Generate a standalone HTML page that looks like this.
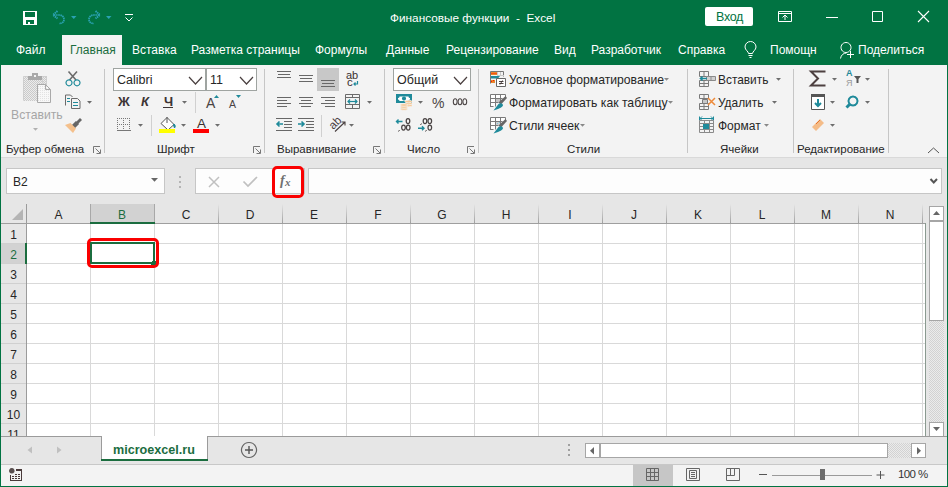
<!DOCTYPE html>
<html><head><meta charset="utf-8">
<style>
*{margin:0;padding:0;box-sizing:border-box}
html,body{width:948px;height:487px;overflow:hidden;background:#e6e6e6;font-family:"Liberation Sans",sans-serif;color:#262626}
.a{position:absolute}
.t{position:absolute;white-space:pre;font-size:12px;line-height:14px}
.w{color:#fff}
.l{position:absolute;white-space:pre;font-size:11.5px;line-height:14px;color:#262626}
.c{position:absolute;white-space:pre;font-size:12px;line-height:14px;color:#262626;text-align:center}
svg{position:absolute;left:0;top:0;overflow:visible}
</style></head><body>
<div class="a" style="left:0px;top:0px;width:948px;height:65px;background:#017342;"></div>
<div class="a" style="left:0px;top:64px;width:1px;height:423px;background:#017342;"></div>
<div class="a" style="left:947px;top:64px;width:1px;height:423px;background:#017342;"></div>
<div class="a" style="left:0px;top:486px;width:948px;height:1px;background:#017342;"></div>
<div class="a" style="left:705px;top:7px;width:48px;height:19px;background:#fff;border-radius:2px"></div>
<div class="a" style="left:62px;top:35px;width:60px;height:30px;background:#f3f3f3;"></div>
<div class="a" style="left:1px;top:65px;width:946px;height:92px;background:#f3f3f3;"></div>
<div class="a" style="left:1px;top:157px;width:946px;height:1px;background:#d9d9d9;"></div>
<div class="a" style="left:1px;top:204px;width:925px;height:20px;background:#e6e6e6;"></div>
<div class="a" style="left:27px;top:224px;width:898px;height:212px;background:#fff;"></div>
<div class="a" style="left:1px;top:224px;width:25px;height:212px;background:#e6e6e6;"></div>
<div class="a" style="left:1px;top:436px;width:946px;height:28px;background:#e6e6e6;"></div>
<div class="a" style="left:1px;top:464px;width:946px;height:1px;background:#c8c8c8;"></div>
<div class="a" style="left:1px;top:465px;width:946px;height:21px;background:#f3f3f3;"></div>
<svg width="948" height="487" viewBox="0 0 948 487" shape-rendering="auto">
<defs><pattern id="dith2" x="0" y="0" width="2" height="2" patternUnits="userSpaceOnUse"><rect width="2" height="2" fill="#ececec"/><rect width="1" height="1" fill="#cacaca"/><rect x="1" y="1" width="1" height="1" fill="#cacaca"/></pattern><pattern id="dith3" x="0" y="0" width="2" height="2" patternUnits="userSpaceOnUse"><rect width="2" height="2" fill="#f8f8f8"/><rect width="1" height="1" fill="#e2e2e2"/></pattern><pattern id="dith" x="0" y="0" width="2" height="2" patternUnits="userSpaceOnUse"><rect width="2" height="2" fill="#ebebeb"/><rect width="1" height="1" fill="#d2d2d2"/><rect x="1" y="1" width="1" height="1" fill="#d2d2d2"/></pattern><linearGradient id="sepg" x1="0" y1="0" x2="0" y2="1"><stop offset="0" stop-color="#e6e6e6"/><stop offset="1" stop-color="#a0a0a0"/></linearGradient></defs>
<rect x="23" y="11" width="14" height="14" fill="#fff"/>
<rect x="25" y="12" width="10" height="5" fill="#017342"/>
<rect x="26" y="20" width="8" height="4" fill="#017342"/>
<rect x="28" y="22" width="2" height="2" fill="#fff"/>
<path d="M57.5 11 L53 15 L57.5 18.5" fill="none" stroke="#2ba2b2" stroke-width="1.9" stroke-dasharray="1.5 0.6"/>
<path d="M54 15 H59 C62 15 64 17 64 19.5 C64 22 62 23.5 59 23.5" fill="none" stroke="#2ba2b2" stroke-width="1.7" stroke-dasharray="1.5 0.6"/>
<path d="M71 16h5.5l-2.75 3z" fill="#2ba2b2" stroke="none" stroke-width="1" />
<path d="M95.5 11 L100 15 L95.5 18.5" fill="none" stroke="#2ba2b2" stroke-width="1.9" stroke-dasharray="1.5 0.6"/>
<path d="M99 15 H94 C91 15 89 17 89 19.5 C89 22 91 23.5 94 23.5" fill="none" stroke="#2ba2b2" stroke-width="1.7" stroke-dasharray="1.5 0.6"/>
<path d="M106 16h5.5l-2.75 3z" fill="#2ba2b2" stroke="none" stroke-width="1" />
<rect x="125" y="14" width="8" height="1" fill="#fff"/>
<path d="M125.5 17.5 L129 21 L132.5 17.5" fill="none" stroke="#fff" stroke-width="1" />
<path d="M778.5 11.5h13v10h-13z M778.5 13.5h13" fill="none" stroke="#fff" stroke-width="1" />
<path d="M785 20v-5 M782.5 17.5l2.5-2.5l2.5 2.5" fill="none" stroke="#fff" stroke-width="1" />
<rect x="826" y="17" width="12" height="1" fill="#fff"/>
<path d="M872.5 11.5h10v10h-10z" fill="none" stroke="#fff" stroke-width="1" />
<path d="M918 11 L929 22 M929 11 L918 22" fill="none" stroke="#fff" stroke-width="1.1" />
<path d="M748.5 53.5c0-2-3.5-3.5-3.5-6.5a5.5 5.5 0 0 1 11 0c0 3-3.5 4.5-3.5 6.5z" fill="none" stroke="#fff" stroke-width="1" />
<path d="M748.5 55.5h4 M749.5 57.5h2" fill="none" stroke="#fff" stroke-width="1" />
<path d="M846 42.5a5 5 0 1 0 0.01 0z" fill="none" stroke="#fff" stroke-width="1" />
<path d="M840.5 58.5c0.5-3.5 3-5.5 6-5.5" fill="none" stroke="#fff" stroke-width="1" />
<path d="M850.5 51v7 M847 54.5h7" fill="none" stroke="#fff" stroke-width="1" />
<rect x="104" y="69" width="1" height="84" fill="#c6c6c6"/>
<rect x="264" y="69" width="1" height="84" fill="#c6c6c6"/>
<rect x="384" y="69" width="1" height="84" fill="#c6c6c6"/>
<rect x="478" y="69" width="1" height="84" fill="#c6c6c6"/>
<rect x="687" y="69" width="1" height="84" fill="#c6c6c6"/>
<rect x="793" y="69" width="1" height="84" fill="#c6c6c6"/>
<rect x="888" y="69" width="1" height="84" fill="#c6c6c6"/>
<path d="M93.5 153v-6.5h6.5" fill="none" stroke="#777" stroke-width="1" />
<path d="M95.5 148.5l4.5 4.5 M100.5 149.5v4h-4" fill="none" stroke="#777" stroke-width="1" />
<path d="M253.5 153v-6.5h6.5" fill="none" stroke="#777" stroke-width="1" />
<path d="M255.5 148.5l4.5 4.5 M260.5 149.5v4h-4" fill="none" stroke="#777" stroke-width="1" />
<path d="M373.5 153v-6.5h6.5" fill="none" stroke="#777" stroke-width="1" />
<path d="M375.5 148.5l4.5 4.5 M380.5 149.5v4h-4" fill="none" stroke="#777" stroke-width="1" />
<path d="M467.5 153v-6.5h6.5" fill="none" stroke="#777" stroke-width="1" />
<path d="M469.5 148.5l4.5 4.5 M474.5 149.5v4h-4" fill="none" stroke="#777" stroke-width="1" />
<path d="M928 153 L933.5 148 L939 153" fill="none" stroke="#555" stroke-width="1" />
<rect x="23" y="76" width="24" height="25" fill="url(#dith2)"/>
<path d="M23.5 100.5v-24h5 M41.5 76.5h5v24z" fill="none" stroke="#cfcfcf" stroke-width="1" />
<rect x="28" y="76" width="14" height="4" fill="#a9a9a9"/>
<rect x="32" y="73" width="6" height="4" fill="#a9a9a9"/>
<rect x="34" y="75" width="2" height="2" fill="#f3f3f3"/>
<path d="M37.5 84.5h8l5 5v13h-13z" fill="url(#dith3)" stroke="#a9a9a9" stroke-width="1" />
<path d="M45.5 84.5v5h5" fill="none" stroke="#a9a9a9" stroke-width="1" />
<path d="M33 128h5l-2.5 2.75z" fill="#b0b0b0"/>
<path d="M68.5 71.5 L76 80 M77 71.5 L69.5 80" fill="none" stroke="#6b6b6b" stroke-width="1.6" />
<path d="M69 79.8a3 3 0 1 0 0.01 0z M77 79.8a3 3 0 1 0 0.01 0z" fill="none" stroke="#1f8a9a" stroke-width="1.2" />
<path d="M65.5 105.5v-10.5h5l2 2" fill="none" stroke="#6b6b6b" stroke-width="1" />
<path d="M71.5 108.5v-10h6l2.5 2.5v7.5z" fill="#f3f3f3" stroke="#6b6b6b" stroke-width="1" />
<path d="M67 98.5h3 M67 101.5h3 M73 102.5h5 M73 105.5h5" fill="none" stroke="#1f8a9a" stroke-width="1" />
<path d="M87 101h5l-2.5 2.75z" fill="#6b6b6b"/>
<path d="M81 119 L77 123" fill="none" stroke="#666" stroke-width="2.8" />
<path d="M77.5 122.5 L72.5 127.5" fill="none" stroke="#666" stroke-width="4.5" />
<path d="M65 125 L70.5 123 L76 128.5 L73 133 Z" fill="#f4c08c" stroke="none" stroke-width="1" />
<rect x="113" y="68" width="93" height="23" fill="#9fa4a1"/>
<rect x="114" y="69" width="91" height="21" fill="#fff"/>
<rect x="206" y="68" width="51" height="23" fill="#9fa4a1"/>
<rect x="207" y="69" width="49" height="21" fill="#fff"/>
<path d="M189 77L195.5 84L202 77" fill="none" stroke="#4a4040" stroke-width="1.2"/>
<path d="M240 77L246.5 84L253 77" fill="none" stroke="#4a4040" stroke-width="1.2"/>
<rect x="163" y="107" width="10" height="1" fill="#3d3535"/>
<path d="M182 101h5l-2.5 2.75z" fill="#6d6d6d"/>
<rect x="195" y="92" width="1" height="21" fill="#d0d0d0"/>
<path d="M214 98h5l-2.5-3z" fill="#1f8a9a" stroke="none" stroke-width="1" />
<path d="M236 95h5l-2.5 3z" fill="#1f8a9a" stroke="none" stroke-width="1" />
<rect x="117" y="118" width="1" height="1" fill="#777"/>
<rect x="119" y="118" width="1" height="1" fill="#777"/>
<rect x="121" y="118" width="1" height="1" fill="#777"/>
<rect x="123" y="118" width="1" height="1" fill="#777"/>
<rect x="125" y="118" width="1" height="1" fill="#777"/>
<rect x="127" y="118" width="1" height="1" fill="#777"/>
<rect x="129" y="118" width="1" height="1" fill="#777"/>
<rect x="117" y="124" width="1" height="1" fill="#777"/>
<rect x="119" y="124" width="1" height="1" fill="#777"/>
<rect x="121" y="124" width="1" height="1" fill="#777"/>
<rect x="123" y="124" width="1" height="1" fill="#777"/>
<rect x="125" y="124" width="1" height="1" fill="#777"/>
<rect x="127" y="124" width="1" height="1" fill="#777"/>
<rect x="129" y="124" width="1" height="1" fill="#777"/>
<rect x="117" y="118" width="1" height="1" fill="#777"/>
<rect x="117" y="120" width="1" height="1" fill="#777"/>
<rect x="117" y="122" width="1" height="1" fill="#777"/>
<rect x="117" y="124" width="1" height="1" fill="#777"/>
<rect x="117" y="126" width="1" height="1" fill="#777"/>
<rect x="117" y="128" width="1" height="1" fill="#777"/>
<rect x="123" y="118" width="1" height="1" fill="#777"/>
<rect x="123" y="120" width="1" height="1" fill="#777"/>
<rect x="123" y="122" width="1" height="1" fill="#777"/>
<rect x="123" y="124" width="1" height="1" fill="#777"/>
<rect x="123" y="126" width="1" height="1" fill="#777"/>
<rect x="123" y="128" width="1" height="1" fill="#777"/>
<rect x="129" y="118" width="1" height="1" fill="#777"/>
<rect x="129" y="120" width="1" height="1" fill="#777"/>
<rect x="129" y="122" width="1" height="1" fill="#777"/>
<rect x="129" y="124" width="1" height="1" fill="#777"/>
<rect x="129" y="126" width="1" height="1" fill="#777"/>
<rect x="129" y="128" width="1" height="1" fill="#777"/>
<rect x="117" y="130" width="14" height="1" fill="#777"/>
<path d="M138 124h5l-2.5 2.75z" fill="#6d6d6d"/>
<rect x="151" y="115" width="1" height="21" fill="#d0d0d0"/>
<path d="M167 117.5 L174 124.5 L168 130 L161 123.5 Z" fill="#fff" stroke="#555" stroke-width="1" />
<path d="M167 117 v6" fill="none" stroke="#555" stroke-width="1" />
<path d="M174 124 c1.5 1 1.5 3 0.5 4 l-1-3z" fill="#1f8a9a" stroke="#1f8a9a" stroke-width="1" />
<rect x="159" y="129" width="16" height="4" fill="#ffff00"/>
<path d="M181 124h5l-2.5 2.75z" fill="#6d6d6d"/>
<rect x="193" y="129" width="16" height="4" fill="#ff0000"/>
<path d="M215 124h5l-2.5 2.75z" fill="#6d6d6d"/>
<rect x="277" y="71" width="14" height="1" fill="#676767"/>
<rect x="277" y="77" width="14" height="1" fill="#676767"/>
<rect x="278" y="74" width="12" height="1" fill="#676767"/>
<rect x="299" y="75" width="14" height="1" fill="#676767"/>
<rect x="299" y="81" width="14" height="1" fill="#676767"/>
<rect x="300" y="78" width="12" height="1" fill="#676767"/>
<rect x="317" y="68" width="22" height="23" fill="#c8c8c8"/>
<rect x="321" y="80" width="14" height="1" fill="#676767"/>
<rect x="321" y="86" width="14" height="1" fill="#676767"/>
<rect x="322" y="83" width="12" height="1" fill="#676767"/>
<path d="M357.5 81v3h-3.5 M355.5 82.5l-1.5 1.5l1.5 1.5" fill="none" stroke="#1f8a9a" stroke-width="1.2" />
<rect x="277" y="97" width="14" height="1" fill="#676767"/>
<rect x="299" y="97" width="14" height="1" fill="#676767"/>
<rect x="321" y="97" width="14" height="1" fill="#676767"/>
<rect x="277" y="100" width="10" height="1" fill="#676767"/>
<rect x="301" y="100" width="10" height="1" fill="#676767"/>
<rect x="325" y="100" width="10" height="1" fill="#676767"/>
<rect x="277" y="103" width="14" height="1" fill="#676767"/>
<rect x="299" y="103" width="14" height="1" fill="#676767"/>
<rect x="321" y="103" width="14" height="1" fill="#676767"/>
<rect x="277" y="106" width="10" height="1" fill="#676767"/>
<rect x="301" y="106" width="10" height="1" fill="#676767"/>
<rect x="325" y="106" width="10" height="1" fill="#676767"/>
<path d="M345.5 94.5h14v14h-14z M345.5 97.5h14 M345.5 104.5h14 M352.5 94.5v3 M352.5 104.5v4" fill="none" stroke="#6b6b6b" stroke-width="1" />
<path d="M348 101.5h9" fill="none" stroke="#1f8a9a" stroke-width="1.2" />
<path d="M350 99.5l-2 2l2 2 M355 99.5l2 2l-2 2" fill="none" stroke="#1f8a9a" stroke-width="1.2" />
<path d="M367 101h5l-2.5 2.75z" fill="#6d6d6d"/>
<rect x="276" y="118" width="16" height="1" fill="#676767"/>
<rect x="298" y="118" width="16" height="1" fill="#676767"/>
<rect x="276" y="130" width="16" height="1" fill="#676767"/>
<rect x="298" y="130" width="16" height="1" fill="#676767"/>
<rect x="284" y="121" width="8" height="1" fill="#676767"/>
<rect x="306" y="121" width="8" height="1" fill="#676767"/>
<rect x="284" y="124" width="8" height="1" fill="#676767"/>
<rect x="306" y="124" width="8" height="1" fill="#676767"/>
<rect x="284" y="127" width="8" height="1" fill="#676767"/>
<rect x="306" y="127" width="8" height="1" fill="#676767"/>
<path d="M283 124h-6 M279.5 121.5l-2.5 2.5l2.5 2.5" fill="none" stroke="#1f8a9a" stroke-width="1.6" />
<path d="M298 124h6 M301.5 121.5l2.5 2.5l-2.5 2.5" fill="none" stroke="#1f8a9a" stroke-width="1.6" />
<rect x="321" y="115" width="1" height="22" fill="#d0d0d0"/>
<path d="M335 131.5 L345 122 M341.5 122h3.5v3.5" fill="none" stroke="#4a4040" stroke-width="1.1" />
<path d="M349 124h5l-2.5 2.75z" fill="#6d6d6d"/>
<rect x="393" y="68" width="78" height="23" fill="#9fa4a1"/>
<rect x="394" y="69" width="76" height="21" fill="#fff"/>
<path d="M454 77L460.5 84L467 77" fill="none" stroke="#4a4040" stroke-width="1.2"/>
<rect x="396" y="94" width="16" height="9" fill="#1f8a9a"/>
<path d="M399.5 96.5h9a1.5 1.5 0 0 0 1.5 1.5v1.5a1.5 1.5 0 0 0 -1.5 1.5h-9a1.5 1.5 0 0 0 -1.5 -1.5v-1.5a1.5 1.5 0 0 0 1.5 -1.5z" fill="#fff" stroke="none" stroke-width="1" />
<path d="M404 96.4a2.1 2.1 0 1 0 0.01 0z" fill="#1f8a9a" stroke="none" stroke-width="1" />
<ellipse cx="408.5" cy="105.5" rx="3.6" ry="1.3" fill="#f6c896" stroke="#f3f3f3" stroke-width="0.7"/>
<ellipse cx="408.5" cy="103.5" rx="3.6" ry="1.3" fill="#f6c896" stroke="#f3f3f3" stroke-width="0.7"/>
<ellipse cx="408.5" cy="101.5" rx="3.6" ry="1.3" fill="#f6c896" stroke="#f3f3f3" stroke-width="0.7"/>
<ellipse cx="404" cy="109" rx="3.6" ry="1.3" fill="#f6c896" stroke="#f3f3f3" stroke-width="0.7"/>
<ellipse cx="404" cy="107" rx="3.6" ry="1.3" fill="#f6c896" stroke="#f3f3f3" stroke-width="0.7"/>
<ellipse cx="404" cy="105" rx="3.6" ry="1.3" fill="#f6c896" stroke="#f3f3f3" stroke-width="0.7"/>
<path d="M418 101h5l-2.5 2.75z" fill="#6d6d6d"/>
<ellipse cx="455.2" cy="101.7" rx="1.9" ry="3" fill="none" stroke="#4a4444" stroke-width="1.05"/>
<ellipse cx="460" cy="101.7" rx="1.9" ry="3" fill="none" stroke="#4a4444" stroke-width="1.05"/>
<ellipse cx="464.8" cy="101.7" rx="1.9" ry="3" fill="none" stroke="#4a4444" stroke-width="1.05"/>
<ellipse cx="408" cy="121" rx="1.8" ry="2.5" fill="none" stroke="#4a4444" stroke-width="1.25"/>
<ellipse cx="403.5" cy="127.6" rx="1.8" ry="2.5" fill="none" stroke="#4a4444" stroke-width="1.25"/>
<ellipse cx="408.2" cy="127.6" rx="1.8" ry="2.5" fill="none" stroke="#4a4444" stroke-width="1.25"/>
<path d="M399.5 130 l-1 1.5" fill="none" stroke="#4a4444" stroke-width="1" />
<path d="M402.5 121.5h-6 M398.5 119.5l-2 2l2 2" fill="none" stroke="#1f8a9a" stroke-width="1.4" />
<ellipse cx="425" cy="121" rx="1.8" ry="2.5" fill="none" stroke="#4a4444" stroke-width="1.25"/>
<ellipse cx="429.8" cy="121" rx="1.8" ry="2.5" fill="none" stroke="#4a4444" stroke-width="1.25"/>
<path d="M421.5 123.5 l-1 1.5" fill="none" stroke="#4a4444" stroke-width="1" />
<ellipse cx="429.8" cy="127.6" rx="1.8" ry="2.5" fill="none" stroke="#4a4444" stroke-width="1.25"/>
<path d="M426.5 130 l-1 1.5" fill="none" stroke="#4a4444" stroke-width="1" />
<path d="M418 128.3h6 M422 126.3l2 2l-2 2" fill="none" stroke="#1f8a9a" stroke-width="1.4" />
<path d="M490.5 83.5v-12h13v5" fill="none" stroke="#777" stroke-width="1" />
<rect x="497" y="72" width="1" height="4" fill="#c8c8c8"/>
<rect x="497" y="75" width="7" height="1" fill="#c8c8c8"/>
<rect x="500" y="72" width="1" height="4" fill="#c8c8c8"/>
<rect x="491" y="72" width="6" height="3" fill="#e8872b"/>
<rect x="491.5" y="73" width="1" height="1" fill="#ff1a00"/>
<rect x="493.5" y="73" width="1" height="1" fill="#ff1a00"/>
<rect x="495.5" y="73" width="1" height="1" fill="#ff1a00"/>
<path d="M491 76h9l-2 2.5h-7z" fill="#1f8a9a" stroke="none" stroke-width="1" />
<rect x="491" y="80" width="4" height="3" fill="#e8872b"/>
<rect x="491" y="81" width="1" height="1" fill="#ff1a00"/>
<rect x="493" y="80" width="1" height="1" fill="#ff1a00"/>
<path d="M496.5 78.5h9v8h-9z" fill="#fff" stroke="#666" stroke-width="1" />
<path d="M499 81.5h4.5 M499 83.5h4.5" fill="none" stroke="#3a3030" stroke-width="0.9" />
<path d="M502.5 80.5 L500 84.5" fill="none" stroke="#3a3030" stroke-width="0.9" />
<path d="M664 78h5l-2.5 2.75z" fill="#888"/>
<path d="M490.5 107v-12.5h15v3 M490.5 106.5h3 M490.5 98.5h12 M490.5 102.5h8 M495.5 94.5v12 M500.5 94.5v8" fill="none" stroke="#7a7a7a" stroke-width="1" />
<rect x="496" y="99" width="4" height="3" fill="#c4c4c4"/>
<rect x="501" y="95" width="4" height="3" fill="#fff"/>
<rect x="491" y="95" width="4" height="3" fill="#fff"/>
<rect x="496" y="95" width="4" height="3" fill="#fff"/>
<rect x="491" y="99" width="4" height="3" fill="#fff"/>
<rect x="491" y="103" width="4" height="3" fill="#fff"/>
<path d="M505.5 96 L507 98 L501 104.5 L498.5 102.5 Z" fill="#666" stroke="none" stroke-width="1" />
<path d="M493.5 110.5 L498.5 104 C500 102.5 503 103 503 105.5 C502.5 107 500 108 498 109 Z" fill="#1f8a9a" stroke="none" stroke-width="1" />
<path d="M668 101h5l-2.5 2.75z" fill="#888"/>
<path d="M490.5 130v-12.5h15v3 M490.5 129.5h3 M490.5 121.5h12 M490.5 125.5h8 M495.5 117.5v12 M500.5 117.5v8" fill="none" stroke="#7a7a7a" stroke-width="1" />
<rect x="496" y="122" width="4" height="3" fill="#d0d0d0"/>
<rect x="501" y="118" width="4" height="3" fill="#fff"/>
<rect x="491" y="118" width="4" height="3" fill="#fff"/>
<rect x="496" y="118" width="4" height="3" fill="#fff"/>
<rect x="491" y="122" width="4" height="3" fill="#fff"/>
<rect x="491" y="126" width="4" height="3" fill="#fff"/>
<path d="M505.5 119 L507 121 L501 127.5 L498.5 125.5 Z" fill="#666" stroke="none" stroke-width="1" />
<path d="M493.5 133.5 L498.5 127 C500 125.5 503 126 503 128.5 C502.5 130 500 131 498 132 Z" fill="#1f8a9a" stroke="none" stroke-width="1" />
<rect x="497" y="123" width="1" height="1" fill="#7cc4e0"/>
<rect x="499" y="122" width="1" height="1" fill="#7cc4e0"/>
<path d="M580 124h5l-2.5 2.75z" fill="#888"/>
<path d="M699.5 71.5h9v5h-9z M704 71.5v5 M699.5 80.5h9v6h-9z M699.5 83.5h9 M704 80.5v6" fill="none" stroke="#7a7a7a" stroke-width="1" />
<path d="M706.5 76.5h9v4h-9z M711 76.5v4" fill="#d0d0d0" stroke="#8a8a8a" stroke-width="1" />
<path d="M707 78.5h-6.5 M702.5 76.5l-2 2l2 2" fill="none" stroke="#1f8a9a" stroke-width="1.6" />
<path d="M776 78h5l-2.5 2.75z" fill="#6d6d6d"/>
<path d="M699.5 94.5h9v4h-9z M704 94.5v4 M699.5 103.5h9v6h-9z M699.5 106.5h9 M704 103.5v6" fill="none" stroke="#7a7a7a" stroke-width="1" />
<path d="M702.5 99.5h5v4h-5z" fill="#c8c8c8" stroke="#7a7a7a" stroke-width="1" />
<path d="M708 98 L715 105 M715 98 L708 105" fill="none" stroke="#ee8a3a" stroke-width="1.5" />
<path d="M772 101h5l-2.5 2.75z" fill="#6d6d6d"/>
<path d="M700 118.5h13 M699.5 116.5v4 M713.5 116.5v4" fill="none" stroke="#1f8a9a" stroke-width="1" />
<path d="M702 116.5l-2 2l2 2 M711 116.5l2 2l-2 2" fill="none" stroke="#1f8a9a" stroke-width="1" />
<path d="M699.5 120.5h14v12h-14z M699.5 123.5h14 M699.5 126.5h14 M699.5 129.5h14 M704.5 120.5v12 M709.5 120.5v12" fill="none" stroke="#8a8a8a" stroke-width="1" />
<rect x="703" y="124" width="6" height="5" fill="#1f8a9a"/>
<path d="M764 124h5l-2.5 2.75z" fill="#888"/>
<path d="M825.5 71.5H811l7 7l-7 7h14.5" fill="none" stroke="#4d4040" stroke-width="2" />
<path d="M832 78h5l-2.5 2.75z" fill="#6d6d6d"/>
<path d="M854 76h7l-2.5 3v4h-2v-4z" fill="#555" stroke="none" stroke-width="1" />
<path d="M865 78h5l-2.5 2.75z" fill="#6d6d6d"/>
<path d="M811.5 94.5h13v15h-13z" fill="#fff" stroke="#555" stroke-width="1" />
<rect x="811" y="94" width="14" height="3" fill="#555"/>
<path d="M818 99v7 M815 103l3 3l3-3" fill="none" stroke="#1f8a9a" stroke-width="2" />
<path d="M830 101h5l-2.5 2.75z" fill="#6d6d6d"/>
<path d="M853 96.5a4.5 4.5 0 1 0 0.01 0z" fill="none" stroke="#1f8a9a" stroke-width="2" />
<path d="M849.5 104.5 L846.5 107.5" fill="none" stroke="#1f8a9a" stroke-width="3" />
<path d="M865 101h5l-2.5 2.75z" fill="#6d6d6d"/>
<path d="M812 127 L820 119 L824 123 L816 131 Z" fill="#f4bc88" stroke="none" stroke-width="1" />
<path d="M816 124 L820 120" fill="none" stroke="#e8742c" stroke-width="1" />
<path d="M830 124h5l-2.5 2.75z" fill="#6d6d6d"/>
<rect x="6" y="168" width="159" height="26" fill="#c6c6c6"/>
<rect x="7" y="169" width="157" height="24" fill="#fdfdfd"/>
<path d="M151 178h7l-3.5 3.85z" fill="#666"/>
<rect x="179" y="176" width="2" height="2" fill="#b4b4b4"/>
<rect x="179" y="181" width="2" height="2" fill="#b4b4b4"/>
<rect x="179" y="186" width="2" height="2" fill="#b4b4b4"/>
<rect x="195" y="168" width="110" height="26" fill="#c6c6c6"/>
<rect x="196" y="169" width="108" height="24" fill="#fdfdfd"/>
<path d="M209 177 L219 187 M219 177 L209 187" fill="none" stroke="#c0c0c0" stroke-width="1.5" />
<path d="M243.5 181.5 L248 186 L257 177" fill="none" stroke="#c0c0c0" stroke-width="1.7" />
<rect x="308" y="168" width="634" height="26" fill="#c6c6c6"/>
<rect x="309" y="169" width="632" height="24" fill="#fdfdfd"/>
<path d="M930.5 179L933.75 182.5L937.0 179" fill="none" stroke="#555" stroke-width="2"/>
<path d="M277 167.5h22a3.5 3.5 0 0 1 3.5 3.5v22a3.5 3.5 0 0 1 -3.5 3.5h-22a3.5 3.5 0 0 1 -3.5 -3.5v-22a3.5 3.5 0 0 1 3.5 -3.5z" fill="none" stroke="#fa0000" stroke-width="3" />
<rect x="90" y="224" width="1" height="212" fill="#d9d9d9"/>
<rect x="154" y="224" width="1" height="212" fill="#d9d9d9"/>
<rect x="218" y="224" width="1" height="212" fill="#d9d9d9"/>
<rect x="282" y="224" width="1" height="212" fill="#d9d9d9"/>
<rect x="346" y="224" width="1" height="212" fill="#d9d9d9"/>
<rect x="410" y="224" width="1" height="212" fill="#d9d9d9"/>
<rect x="474" y="224" width="1" height="212" fill="#d9d9d9"/>
<rect x="538" y="224" width="1" height="212" fill="#d9d9d9"/>
<rect x="602" y="224" width="1" height="212" fill="#d9d9d9"/>
<rect x="666" y="224" width="1" height="212" fill="#d9d9d9"/>
<rect x="730" y="224" width="1" height="212" fill="#d9d9d9"/>
<rect x="794" y="224" width="1" height="212" fill="#d9d9d9"/>
<rect x="858" y="224" width="1" height="212" fill="#d9d9d9"/>
<rect x="922" y="224" width="1" height="212" fill="#d9d9d9"/>
<rect x="27" y="243" width="898" height="1" fill="#d9d9d9"/>
<rect x="27" y="263" width="898" height="1" fill="#d9d9d9"/>
<rect x="27" y="283" width="898" height="1" fill="#d9d9d9"/>
<rect x="27" y="303" width="898" height="1" fill="#d9d9d9"/>
<rect x="27" y="323" width="898" height="1" fill="#d9d9d9"/>
<rect x="27" y="343" width="898" height="1" fill="#d9d9d9"/>
<rect x="27" y="363" width="898" height="1" fill="#d9d9d9"/>
<rect x="27" y="383" width="898" height="1" fill="#d9d9d9"/>
<rect x="27" y="403" width="898" height="1" fill="#d9d9d9"/>
<rect x="27" y="423" width="898" height="1" fill="#d9d9d9"/>
<rect x="1" y="243" width="25" height="1" fill="#d0d0d0"/>
<rect x="1" y="263" width="25" height="1" fill="#d0d0d0"/>
<rect x="1" y="283" width="25" height="1" fill="#d0d0d0"/>
<rect x="1" y="303" width="25" height="1" fill="#d0d0d0"/>
<rect x="1" y="323" width="25" height="1" fill="#d0d0d0"/>
<rect x="1" y="343" width="25" height="1" fill="#d0d0d0"/>
<rect x="1" y="363" width="25" height="1" fill="#d0d0d0"/>
<rect x="1" y="383" width="25" height="1" fill="#d0d0d0"/>
<rect x="1" y="403" width="25" height="1" fill="#d0d0d0"/>
<rect x="1" y="423" width="25" height="1" fill="#d0d0d0"/>
<rect x="26" y="204" width="1" height="232" fill="#9b9b9b"/>
<rect x="1" y="223" width="925" height="1" fill="#9f9f9f"/>
<rect x="925" y="223" width="1" height="213" fill="#8a9a90"/>
<rect x="90" y="204" width="1" height="19" fill="url(#sepg)"/>
<rect x="154" y="204" width="1" height="19" fill="url(#sepg)"/>
<rect x="218" y="204" width="1" height="19" fill="url(#sepg)"/>
<rect x="282" y="204" width="1" height="19" fill="url(#sepg)"/>
<rect x="346" y="204" width="1" height="19" fill="url(#sepg)"/>
<rect x="410" y="204" width="1" height="19" fill="url(#sepg)"/>
<rect x="474" y="204" width="1" height="19" fill="url(#sepg)"/>
<rect x="538" y="204" width="1" height="19" fill="url(#sepg)"/>
<rect x="602" y="204" width="1" height="19" fill="url(#sepg)"/>
<rect x="666" y="204" width="1" height="19" fill="url(#sepg)"/>
<rect x="730" y="204" width="1" height="19" fill="url(#sepg)"/>
<rect x="794" y="204" width="1" height="19" fill="url(#sepg)"/>
<rect x="858" y="204" width="1" height="19" fill="url(#sepg)"/>
<rect x="922" y="204" width="1" height="19" fill="url(#sepg)"/>
<path d="M23 209 L23 220 L12 220 Z" fill="#b4b4b4" stroke="none" stroke-width="1" />
<rect x="91" y="204" width="63" height="18" fill="#d2d2d2"/>
<rect x="90" y="204" width="1" height="19" fill="#a8a8a8"/>
<rect x="154" y="204" width="1" height="19" fill="#a8a8a8"/>
<rect x="90" y="222" width="65" height="2" fill="#1b6d3f"/>
<rect x="1" y="244" width="24" height="19" fill="#d2d2d2"/>
<rect x="25" y="243" width="2" height="21" fill="#1b6d3f"/>
<path d="M91 243h63v20h-63z" fill="none" stroke="#1b6d3f" stroke-width="2" />
<rect x="151" y="261" width="5" height="5" fill="#1b6d3f"/>
<rect x="150" y="260" width="2" height="2" fill="#fff"/>
<path d="M92 239.5h62a3.5 3.5 0 0 1 3.5 3.5v20a3.5 3.5 0 0 1 -3.5 3.5h-62a3.5 3.5 0 0 1 -3.5 -3.5v-20a3.5 3.5 0 0 1 3.5 -3.5z" fill="none" stroke="#fa0000" stroke-width="3" />
<rect x="926" y="204" width="21" height="232" fill="#e6e6e6"/>
<rect x="929" y="206" width="15" height="15" fill="#a6a6a6"/>
<rect x="930" y="207" width="13" height="13" fill="#fff"/>
<path d="M933 215h7l-3.5-4z" fill="#666" stroke="none" stroke-width="1" />
<rect x="929" y="220" width="15" height="101" fill="#a6a6a6"/>
<rect x="930" y="222" width="13" height="98" fill="#fff"/>
<rect x="929" y="321" width="15" height="101" fill="url(#dith)"/>
<rect x="929" y="422" width="15" height="15" fill="#a6a6a6"/>
<rect x="930" y="423" width="13" height="13" fill="#fff"/>
<path d="M933 427h7l-3.5 4z" fill="#666" stroke="none" stroke-width="1" />
<rect x="1" y="436" width="946" height="1" fill="#9b9b9b"/>
<path d="M32 446.5v7l-4.5-3.5z" fill="#c0c0c0" stroke="none" stroke-width="1" />
<path d="M57 446.5v7l4.5-3.5z" fill="#c0c0c0" stroke="none" stroke-width="1" />
<rect x="101" y="436" width="107" height="25" fill="#9b9b9b"/>
<rect x="102" y="436" width="105" height="23" fill="#fff"/>
<rect x="101" y="459" width="107" height="2" fill="#1b6d3f"/>
<path d="M249 442.5a7.5 7.5 0 1 0 0.01 0z" fill="none" stroke="#666" stroke-width="1.2" />
<path d="M249 446v8 M245 450h8" fill="none" stroke="#555" stroke-width="1.4" />
<rect x="568" y="444" width="2" height="2" fill="#a0a0a0"/>
<rect x="568" y="449" width="2" height="2" fill="#a0a0a0"/>
<rect x="568" y="454" width="2" height="2" fill="#a0a0a0"/>
<rect x="585" y="443" width="15" height="15" fill="#a6a6a6"/>
<rect x="586" y="444" width="13" height="13" fill="#fff"/>
<path d="M594 447v7.5l-4-3.75z" fill="#666" stroke="none" stroke-width="1" />
<rect x="599" y="443" width="289" height="15" fill="#a6a6a6"/>
<rect x="601" y="444" width="286" height="13" fill="#fff"/>
<rect x="888" y="443" width="23" height="15" fill="url(#dith)"/>
<rect x="911" y="443" width="15" height="15" fill="#a6a6a6"/>
<rect x="912" y="444" width="13" height="13" fill="#fff"/>
<path d="M917 447v7.5l4-3.75z" fill="#666" stroke="none" stroke-width="1" />
<path d="M11.8 468a2.8 2.8 0 1 0 0.01 0z" fill="#5a5050" stroke="none" stroke-width="1" />
<rect x="16" y="469" width="6" height="2" fill="#4a3a3a"/>
<path d="M21.5 471v10 M10 480.5h12 M10.5 475v6" fill="none" stroke="#4a3a3a" stroke-width="1" />
<rect x="15" y="474" width="2" height="1" fill="#4a3a3a"/>
<rect x="18" y="474" width="2" height="1" fill="#4a3a3a"/>
<rect x="12" y="476" width="2" height="1" fill="#4a3a3a"/>
<rect x="15" y="476" width="2" height="1" fill="#4a3a3a"/>
<rect x="18" y="476" width="2" height="1" fill="#4a3a3a"/>
<rect x="12" y="478" width="2" height="1" fill="#4a3a3a"/>
<rect x="15" y="478" width="2" height="1" fill="#4a3a3a"/>
<rect x="18" y="478" width="2" height="1" fill="#4a3a3a"/>
<rect x="633" y="465" width="40" height="21" fill="#c6c6c6"/>
<path d="M646.5 468.5h12v12h-12z M646.5 472.5h12 M646.5 476.5h12 M650.5 468.5v12 M654.5 468.5v12" fill="none" stroke="#666" stroke-width="1" />
<path d="M686.5 468.5h13v12h-13z M689.5 470.5h7v8h-7z M691 472.5h4 M691 474.5h4 M691 476.5h4" fill="none" stroke="#666" stroke-width="1" />
<path d="M726.5 468.5h13v12h-13z M726.5 475.5h8v-7 M730.5 468.5v7" fill="none" stroke="#666" stroke-width="1" />
<rect x="759" y="474" width="8" height="1" fill="#555"/>
<rect x="772" y="475" width="100" height="1" fill="#9a9a9a"/>
<rect x="820" y="469" width="5" height="11" fill="#6d6d6d"/>
<path d="M876.5 475h8 M880.5 471v8" fill="none" stroke="#555" stroke-width="1" />
</svg>
<div class="t w" style="left:390px;top:11px;font-size:11.8px">Финансовые функции  -  Excel</div>
<div class="t" style="left:716px;top:10px;color:#017342;font-size:12.5px;letter-spacing:-0.3px">Вход</div>
<div class="t w" style="left:16px;top:43px;">Файл</div>
<div class="t w" style="left:132px;top:43px;">Вставка</div>
<div class="t w" style="left:191px;top:43px;">Разметка страницы</div>
<div class="t w" style="left:315px;top:43px;">Формулы</div>
<div class="t w" style="left:386px;top:43px;">Данные</div>
<div class="t w" style="left:446px;top:43px;">Рецензирование</div>
<div class="t w" style="left:554px;top:43px;">Вид</div>
<div class="t w" style="left:591px;top:43px;">Разработчик</div>
<div class="t w" style="left:678px;top:43px;">Справка</div>
<div class="t w" style="left:770px;top:43px;">Помощн</div>
<div class="t w" style="left:858px;top:43px;">Поделиться</div>
<div class="t" style="left:70px;top:43px;color:#1b6d3f">Главная</div>
<div class="l" style="left:6px;top:142px;">Буфер обмена</div>
<div class="l" style="left:157px;top:142px;">Шрифт</div>
<div class="l" style="left:277px;top:142px;">Выравнивание</div>
<div class="l" style="left:407px;top:142px;">Число</div>
<div class="l" style="left:567px;top:142px;">Стили</div>
<div class="l" style="left:720px;top:142px;">Ячейки</div>
<div class="l" style="left:797px;top:142px;">Редактирование</div>
<div class="t" style="left:11px;top:108px;color:#a6a6a6;font-size:12.2px">Вставить</div>
<div class="t" style="left:117px;top:73px;font-size:12.5px">Calibri</div>
<div class="t" style="left:210px;top:73px;font-size:12.5px">11</div>
<div class="t" style="left:118px;top:95px;font-weight:bold;font-size:13px;color:#3d3535">Ж</div>
<div class="t" style="left:141px;top:95px;font-weight:bold;font-style:italic;font-size:13px;color:#3d3535">К</div>
<div class="t" style="left:164px;top:95px;font-weight:bold;font-size:13px;color:#3d3535">Ч</div>
<div class="t" style="left:206px;top:96px;font-size:14px;color:#4a4444">A</div>
<div class="t" style="left:229px;top:97px;font-size:10.5px;color:#4a4444">A</div>
<div class="t" style="left:197px;top:117px;font-size:13.5px;color:#3a3030">A</div>
<div class="t" style="left:346px;top:68px;font-size:11px;color:#3a3030">ab</div>
<div class="t" style="left:347px;top:75px;font-size:11.5px;color:#3a3030">c</div>
<div class="t" style="left:329px;top:115px;font-size:11.5px;color:#4a4040;transform:rotate(-45deg);transform-origin:7px 8px">ab</div>
<div class="t" style="left:397px;top:73px;font-size:12.5px">Общий</div>
<div class="t" style="left:432px;top:96px;font-size:14px;color:#4a4444">%</div>
<div class="t" style="left:509px;top:73px;font-size:12.2px">Условное форматирование</div>
<div class="t" style="left:509px;top:96px;font-size:12.2px">Форматировать как таблицу</div>
<div class="t" style="left:509px;top:119px;font-size:12.2px">Стили ячеек</div>
<div class="t" style="left:718px;top:73px;font-size:11.9px">Вставить</div>
<div class="t" style="left:718px;top:96px;font-size:11.9px">Удалить</div>
<div class="t" style="left:718px;top:119px;font-size:12px">Формат</div>
<div class="t" style="left:846px;top:66px;font-size:9px;color:#1f8a9a;font-weight:bold">A</div>
<div class="t" style="left:846px;top:76px;font-size:9px;color:#999">Я</div>
<div class="t" style="left:13px;top:175px;font-size:12px;color:#262626">B2</div>
<div class="t" style="left:280px;top:172px;font-family:'Liberation Serif';font-style:italic;font-weight:bold;font-size:14px;line-height:18px;color:#707070">f</div>
<div class="t" style="left:285px;top:175px;font-family:'Liberation Serif';font-style:italic;font-weight:bold;font-size:11px;line-height:14px;color:#707070">x</div>
<div class="c" style="left:27px;top:208px;width:63px;color:#262626">A</div>
<div class="c" style="left:90px;top:208px;width:64px;color:#1b6d3f">B</div>
<div class="c" style="left:154px;top:208px;width:64px;color:#262626">C</div>
<div class="c" style="left:218px;top:208px;width:64px;color:#262626">D</div>
<div class="c" style="left:282px;top:208px;width:64px;color:#262626">E</div>
<div class="c" style="left:346px;top:208px;width:64px;color:#262626">F</div>
<div class="c" style="left:410px;top:208px;width:64px;color:#262626">G</div>
<div class="c" style="left:474px;top:208px;width:64px;color:#262626">H</div>
<div class="c" style="left:538px;top:208px;width:64px;color:#262626">I</div>
<div class="c" style="left:602px;top:208px;width:64px;color:#262626">J</div>
<div class="c" style="left:666px;top:208px;width:64px;color:#262626">K</div>
<div class="c" style="left:730px;top:208px;width:64px;color:#262626">L</div>
<div class="c" style="left:794px;top:208px;width:64px;color:#262626">M</div>
<div class="c" style="left:858px;top:208px;width:64px;color:#262626">N</div>
<div class="c" style="left:1px;top:228px;width:25px;color:#262626;">1</div>
<div class="c" style="left:1px;top:248px;width:25px;color:#1b6d3f;">2</div>
<div class="c" style="left:1px;top:268px;width:25px;color:#262626;">3</div>
<div class="c" style="left:1px;top:288px;width:25px;color:#262626;">4</div>
<div class="c" style="left:1px;top:308px;width:25px;color:#262626;">5</div>
<div class="c" style="left:1px;top:328px;width:25px;color:#262626;">6</div>
<div class="c" style="left:1px;top:348px;width:25px;color:#262626;">7</div>
<div class="c" style="left:1px;top:368px;width:25px;color:#262626;">8</div>
<div class="c" style="left:1px;top:388px;width:25px;color:#262626;">9</div>
<div class="c" style="left:1px;top:408px;width:25px;color:#262626;">10</div>
<div class="c" style="left:1px;top:428px;width:25px;color:#262626;clip-path:inset(0 0 6px 0)">11</div>
<div class="t" style="left:113px;top:443px;font-weight:bold;font-size:12.6px;color:#1b6d3f">microexcel.ru</div>
<div class="t" style="left:898px;top:467px;font-size:11.5px;letter-spacing:-0.6px;color:#333">100 %</div>
</body></html>
